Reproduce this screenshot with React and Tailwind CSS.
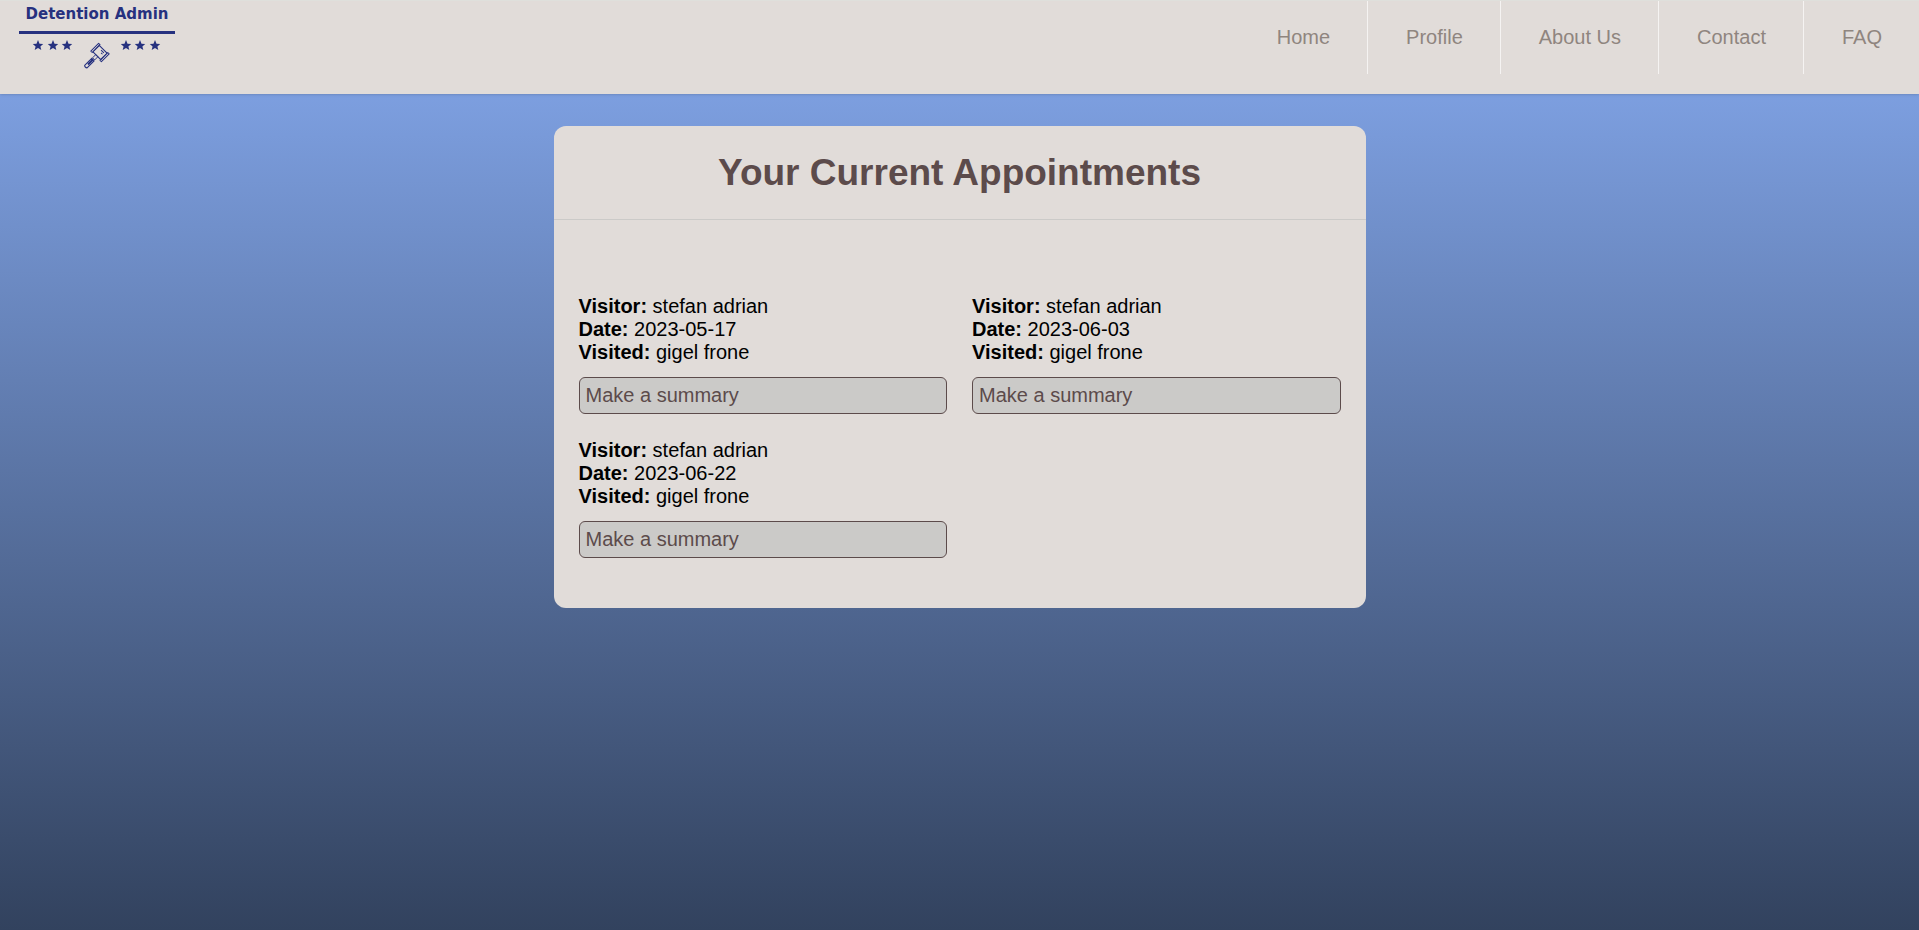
const navItems = ['Home', 'Profile', 'About Us', 'Contact', 'FAQ'];

const appointments = [
  { visitor: 'stefan adrian', date: '2023-05-17', visited: 'gigel frone' },
  { visitor: 'stefan adrian', date: '2023-06-03', visited: 'gigel frone' },
  { visitor: 'stefan adrian', date: '2023-06-22', visited: 'gigel frone' },
];

const STAR = 'M0 -5.500 L1.500 -1.800 L5.200 -1.600 L2.400 0.900 L3.300 4.600 L0 2.600 L-3.300 4.600 L-2.400 0.900 L-5.200 -1.600 L-1.500 -1.800 Z';
const starXs = [19, 34, 48, 107, 121, 136];

function Logo() {
  return (
    <a href="#home" className="ml-[19px] flex w-[156px] flex-col items-center pt-[3px] text-[#26317f]">
      <span className="font-['DejaVu_Sans',sans-serif] text-[15px] leading-5 font-bold whitespace-nowrap">Detention Admin</span>
      <svg className="mt-1.5 w-full" viewBox="0 0 156 40" height="40" fill="none" aria-hidden="true">
        <path d="M0 1h156v3H0z" fill="currentColor" />
        {starXs.map((x) => (
          <path key={x} d={STAR} transform={`translate(${x} 15.5)`} fill="currentColor" />
        ))}
        <g transform="translate(81 22.500) rotate(45)" stroke="currentColor" strokeLinejoin="round">
          <path d="M-5.500 -4.500h11v9h-11z" strokeWidth="1" />
          <path d="M-7.500 -5.500h2v11h-2zM5.500 -5.500h2v11h-2z" strokeWidth="1" />
          <path d="M-1.500 4.500h3v4.500h-3z" strokeWidth="0.900" />
          <path d="M-1.700 10h3.400v10q-1.700 1.500 -3.400 0z" strokeWidth="1.100" />
          <path d="M0 10v7" strokeWidth="2" />
          <path d="M-1 -2.500h4M1 -.5h2" strokeWidth="1" />
        </g>
      </svg>
    </a>
  );
}

function Appointment({ visitor, date, visited, id }) {
  return (
    <li>
      <p><strong>Visitor:</strong> {visitor}</p>
      <p><strong>Date:</strong> {date}</p>
      <p><strong>Visited:</strong> {visited}</p>
      <input
        id={id}
        type="text"
        aria-label="Make a summary"
        placeholder="Make a summary"
        className="mt-[13px] block h-[37px] w-full rounded-md border border-[#5c4b4b] bg-[#cbcac8] px-1.5 text-[#5c4b4b] placeholder:text-[#5c4b4b]"
      />
    </li>
  );
}

export default function App() {
  return (
    <div className="flex min-h-screen flex-col bg-linear-to-b/srgb from-[#85a9ee] to-[#32425e] font-['Liberation_Sans',Arial,sans-serif] text-xl leading-[23px] text-black">
      <header className="flex h-[94px] items-start justify-between border-t border-[#dfe0dc] bg-[#e1dcd9] shadow-sm">
        <Logo />
        <nav>
          <ul className="flex divide-x divide-[#f5f3f2]">
            {navItems.map((item) => (
              <li key={item}>
                <a href="#" className="flex h-[73px] items-center pr-[37px] pl-[38px] text-[#8f857f]">{item}</a>
              </li>
            ))}
          </ul>
        </nav>
      </header>
      <main className="mx-auto mt-8 w-full max-w-[812px] rounded-xl bg-[#e1dcd9]">
        <h1 className="border-b border-[#cbcac8] pt-[25px] pb-6 text-center text-[37px] leading-[44px] font-bold text-[#5c4b4b]">
          Your Current Appointments
        </h1>
        <ul className="grid grid-cols-2 gap-[25px] px-[25px] pt-[75px] pb-[50px]">
          {appointments.map((a, i) => (
            <Appointment key={a.date} id={`summary-${i}`} {...a} />
          ))}
        </ul>
      </main>
    </div>
  );
}
